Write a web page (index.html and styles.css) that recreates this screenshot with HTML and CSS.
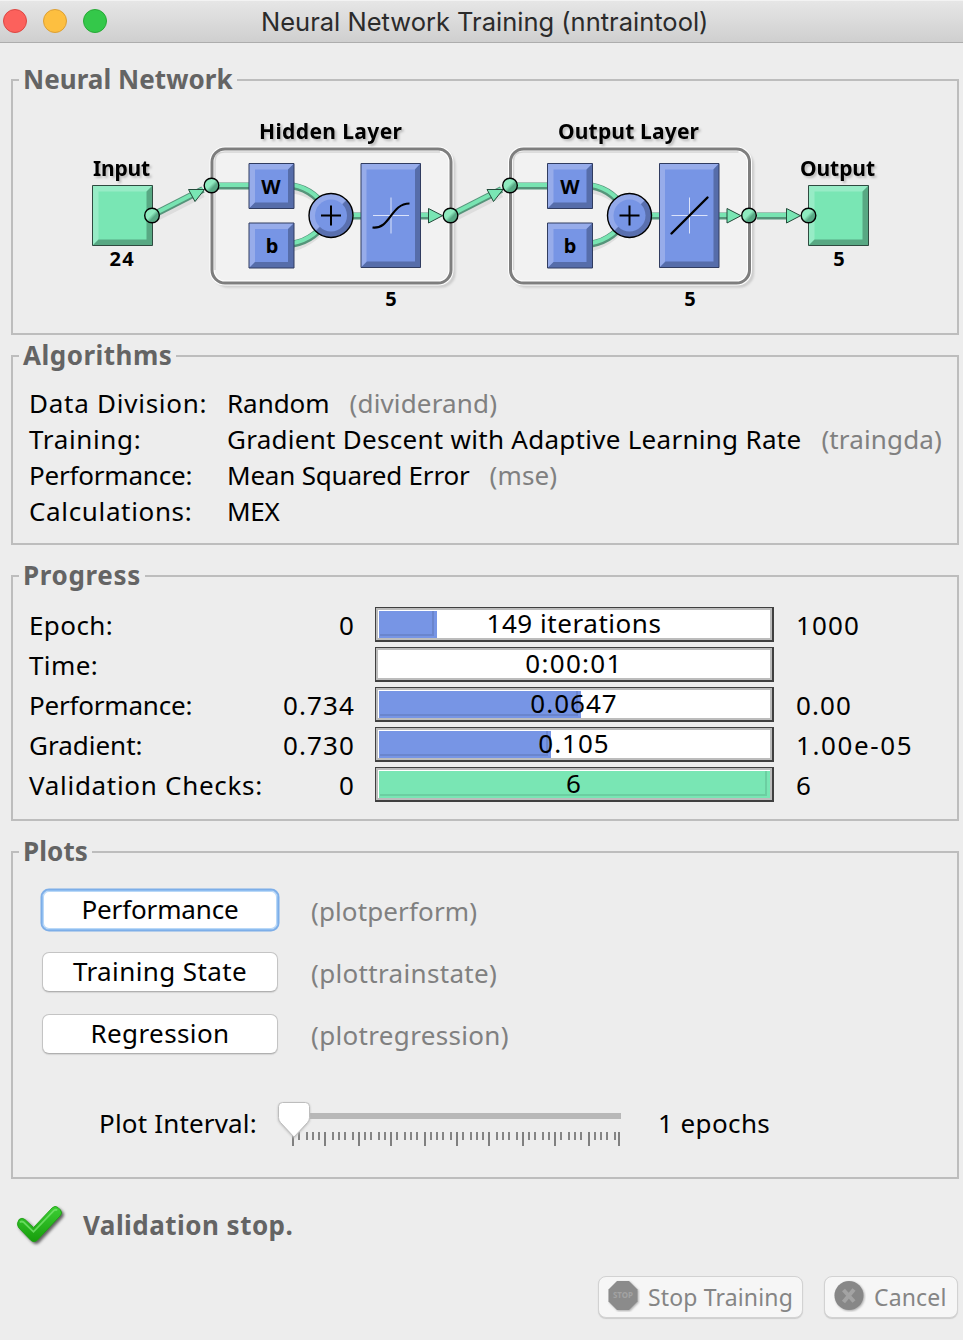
FILE: index.html
```html
<!DOCTYPE html>
<html lang="en">
<head>
<meta charset="utf-8">
<title>Neural Network Training (nntraintool)</title>
<link rel="stylesheet" href="styles.css">
</head>
<body>
<header class="titlebar">
  <div class="lights"><i class="light red"></i><i class="light yellow"></i><i class="light green"></i></div>
  <h1 class="title">Neural Network Training (nntraintool)</h1>
</header>
<main class="content">
  <section class="panel network">
    <h2 class="legend l-network">Neural Network</h2>
    <svg class="diagram" viewBox="13 81 944 252" width="944" height="252">
      <defs>
        <linearGradient id="ball" x1="0" y1="0" x2="1" y2="1"><stop offset=".45" stop-color="#8eeabf"/><stop offset=".62" stop-color="#58a985"/></linearGradient>
        <linearGradient id="rim" x1="0" y1="0" x2="1" y2="1"><stop offset=".49" stop-color="#93a9ea"/><stop offset=".51" stop-color="#5a70af"/></linearGradient>
        <filter id="soft" x="-20%" y="-20%" width="140%" height="140%"><feGaussianBlur stdDeviation="1"/></filter>
        <g id="io"><path fill="#79e6b4" d="M0 0h60v60H0z"/><path fill="#97ecc6" d="M0 0h60l-6 6H6v48l-6 6z"/><path fill="#58a883" d="M60 0v60H0l6-6h48V6z"/><path fill="none" stroke="#2f4a40" d="M0 0h60v60H0z"/></g>
        <g id="param"><path fill="#7795e5" d="M0 0h45v45H0z"/><path fill="#97acea" d="M0 0h45l-6 6H6v33l-6 6z"/><path fill="#566daa" d="M45 0v45H0l6-6h33V6z"/><path fill="none" stroke="#303c60" d="M0 0h45v45H0z"/></g>
        <g id="node"><circle r="7.3" fill="url(#ball)" stroke="#000" stroke-width="1.4"/></g>
        <g id="layer">
          <rect x="215" y="152" width="239" height="134" rx="13" fill="none" stroke="#aaa" stroke-width="3" opacity=".55" filter="url(#soft)"/>
          <rect x="210" y="147" width="242" height="137" rx="15" fill="#fff"/>
          <rect x="212" y="149" width="239" height="134" rx="13" fill="#f2f2f2" stroke="#fff" stroke-width="5"/>
          <path d="M215 270V161q0-9 10-9h215" fill="none" stroke="#d5d5d5" stroke-width="1.5"/>
          <rect x="212" y="149" width="239" height="134" rx="13" fill="none" stroke="#7e7e7e" stroke-width="3"/>
          <g fill="none" stroke="#dedede" stroke-width="7"><path d="M293 190q23 3 37 25M293 248q23-7 37-28"/></g>
          <g fill="none" stroke="#55947a" stroke-width="7"><path d="M212 186h38M293 186q23 4 37 29M293 244q23-4 37-28M350 216h80"/></g>
          <g fill="none" stroke="#78e4b2" stroke-width="4"><path d="M212 185h38M293 185q23 4 37 29M293 243q23-4 37-28M350 215h80"/></g>
          <use href="#param" x="249" y="163.500"/><use href="#param" x="249" y="223"/>
          <circle cx="331" cy="215.500" r="22" fill="url(#rim)" stroke="#000" stroke-width="1.4"/><circle cx="331" cy="215.500" r="16" fill="#7795e5"/>
          <path d="M321 215.500h20M331 205.500v20" stroke="#000" stroke-width="2"/>
          <g transform="translate(-.5 0)"><path fill="#7795e5" d="M361.500 163.500h59.500v104h-59.500z"/><path fill="#97acea" d="M361.500 163.500H421l-6 6h-48v92l-5.500 6z"/><path fill="#566daa" d="M421 163.500v104h-59.500l6-6h48v-92z"/><path fill="none" stroke="#303c60" d="M361.500 163.500H421v104h-59.500z"/></g>
          <path d="M373 215.500h36M391 197.500v36" stroke="#dbe3fa"/>
          <path d="M428.500 208.500v14.500l14-7.300z" fill="#79e6b4" stroke="#234b3a"/>
        </g>
        <g id="link"><path d="M152 220l51-26" stroke="#ddd" stroke-width="7"/><path d="M152 215.500l51-26" stroke="#55947a" stroke-width="7"/><path d="M152 215l51-26" stroke="#78e4b2" stroke-width="4"/><path d="M188.500 189.500l16 0-9.500 12z" fill="#79e6b4" stroke="#234b3a"/></g>
      </defs>
      <use href="#link"/>
      <use href="#layer"/>
      <use href="#link" x="298.500"/>
      <use href="#layer" x="298.500"/>
      <path d="M372.500 227.500c18 2 18-24 37-24" fill="none" stroke="#000" stroke-width="2.200"/>
      <path d="M671.500 233.500l36-36" stroke="#000" stroke-width="2.400" stroke-linecap="round"/>
      <path d="M757 216h34" stroke="#55947a" stroke-width="7"/><path d="M757 215h34" stroke="#78e4b2" stroke-width="4"/>
      <path d="M786.500 208.500v14.500l14-7.300z" fill="#79e6b4" stroke="#234b3a"/>
      <use href="#io" x="92.500" y="185.500"/><use href="#io" x="808.500" y="185.500"/>
      <use href="#node" x="152" y="215.500"/><use href="#node" x="749" y="215.500"/><use href="#node" x="808.500" y="215.500"/><use href="#node" x="211.500" y="185.500"/><use href="#node" x="510" y="185.500"/><use href="#node" x="450.500" y="215.500"/>
      <g class="caption">
        <text x="93" y="176" textLength="57">Input</text><text x="259" y="139" textLength="143">Hidden Layer</text><text x="558" y="139" textLength="141">Output Layer</text><text x="800" y="176" textLength="75">Output</text>
      </g>
      <g class="count">
        <text x="109.500" y="266" class="wide">24</text><text x="391" y="306">5</text><text x="690" y="306">5</text><text x="839" y="266">5</text>
        <text x="271" y="194">W</text><text x="272" y="253">b</text><text x="570" y="194">W</text><text x="570" y="253">b</text>
      </g>
    </svg>
  </section>

  <section class="panel algorithms">
    <h2 class="legend l-algorithms">Algorithms</h2>
    <dl class="facts">
      <dt class="t-division">Data Division:</dt><dd><span class="t-random">Random</span><span class="fn t-divfn">(dividerand)</span></dd>
      <dt class="t-training">Training:</dt><dd><span class="t-gd">Gradient Descent with Adaptive Learning Rate</span><span class="fn t-gdfn">(traingda)</span></dd>
      <dt class="t-perf">Performance:</dt><dd><span class="t-mse">Mean Squared Error</span><span class="fn t-msefn">(mse)</span></dd>
      <dt class="t-calc">Calculations:</dt><dd><span class="t-mex">MEX</span></dd>
    </dl>
  </section>

  <section class="panel progress">
    <h2 class="legend l-progress">Progress</h2>
    <div class="row"><span>Epoch:</span><span class="from">0</span><div class="bar"><i class="fill" style="width:58px"></i><b class="value v-epoch">149 iterations</b></div><span class="to">1000</span></div>
    <div class="row"><span>Time:</span><span class="from"></span><div class="bar"><b class="value v-time">0:00:01</b></div><span class="to"></span></div>
    <div class="row"><span class="t-perf">Performance:</span><span class="from">0.734</span><div class="bar"><i class="fill" style="width:202px"></i><b class="value">0.0647</b></div><span class="to">0.00</span></div>
    <div class="row"><span class="t-gradient">Gradient:</span><span class="from">0.730</span><div class="bar"><i class="fill" style="width:172px"></i><b class="value">0.105</b></div><span class="to to-gradient">1.00e-05</span></div>
    <div class="row"><span class="t-checks">Validation Checks:</span><span class="from">0</span><div class="bar"><i class="fill done" style="width:391px"></i><b class="value">6</b></div><span class="to">6</span></div>
  </section>

  <section class="panel plots">
    <h2 class="legend l-plots">Plots</h2>
    <div class="plot"><button class="button focused b-perf">Performance</button><span class="fn p-perf">(plotperform)</span></div>
    <div class="plot"><button class="button">Training State</button><span class="fn">(plottrainstate)</span></div>
    <div class="plot"><button class="button">Regression</button><span class="fn">(plotregression)</span></div>
    <div class="interval">
      <span class="interval-label">Plot Interval:</span>
      <svg class="slider" viewBox="276 1098 350 54" width="350" height="54">
        <path d="M300 1116h321" stroke="#b8b8b8" stroke-width="6"/>
        <path d="M293 1132v14M325 1132v14M359 1132v14M391 1132v14M425 1132v14M457 1132v14M489 1132v14M523 1132v14M555 1132v14M589 1132v14M619 1132v14" stroke="#808080" stroke-width="2"/>
        <path d="M299 1132v8M307 1132v8M313 1132v8M319 1132v8M333 1132v8M339 1132v8M345 1132v8M353 1132v8M365 1132v8M371 1132v8M379 1132v8M385 1132v8M397 1132v8M405 1132v8M411 1132v8M417 1132v8M431 1132v8M437 1132v8M443 1132v8M451 1132v8M463 1132v8M471 1132v8M477 1132v8M483 1132v8M497 1132v8M503 1132v8M509 1132v8M517 1132v8M529 1132v8M535 1132v8M543 1132v8M549 1132v8M561 1132v8M569 1132v8M575 1132v8M581 1132v8M595 1132v8M601 1132v8M607 1132v8M615 1132v8" stroke="#858585" stroke-width="2"/>
        <path class="thumb" d="M282.500 1102.500h23q4 0 4 4v11q0 3-2 5l-13.500 14.500-13.500-14.500q-2-2-2-5v-11q0-4 4-4z" fill="#fff" stroke="#bdbdbd"/>
      </svg>
      <span class="interval-value">1 epochs</span>
    </div>
  </section>

  <div class="status">
    <svg class="check" viewBox="14 1200 54 48" width="54" height="48">
      <defs><linearGradient id="leaf" x1="0" y1="0" x2="0" y2="1"><stop offset="0" stop-color="#3dcf35"/><stop offset="1" stop-color="#169d0b"/></linearGradient></defs>
      <path class="check-mark" d="M19 1219.500q3-2.500 6 0l8.500 8 18.500-19.500q3-3 6-.5l2.500 2.500q2.500 3-.5 6l-23 24.500q-3 2.500-6 0l-12.500-13q-2.500-3.500.5-8z" fill="url(#leaf)" stroke="#1d9e12" stroke-width=".8"/>
      <path d="M20 1222.500q1.500-2 4 0l9.500 9.300 20.500-21.300q2-1.500 3 0" fill="none" stroke="#7be571" stroke-width="1.800" opacity=".75"/>
    </svg>
    <strong class="status-text">Validation stop.</strong>
  </div>

  <footer class="actions">
    <button class="action stop" disabled>
      <svg class="action-icon" viewBox="0 0 32 32" width="32" height="32"><path class="badge" d="M9 1h12L29.500 9.500v12L21 30H9L.5 21.500v-12z" fill="#8b8b8b"/><text class="stop-word" x="5" y="18" textLength="20" lengthAdjust="spacingAndGlyphs">STOP</text></svg>
      <span class="stop-label">Stop Training</span>
    </button>
    <button class="action cancel" disabled>
      <svg class="action-icon" viewBox="0 0 32 32" width="32" height="32"><circle class="badge" cx="15" cy="15.500" r="14.500" fill="#878787"/><path d="M9.500 10l10.500 11.500M20 9.500l-10.500 12.500" stroke="#a3a3a3" stroke-width="4"/></svg>
      <span class="cancel-label">Cancel</span>
    </button>
  </footer>
</main>
</body>
</html>
```
FILE: styles.css
```css
* { box-sizing: border-box; }
body { margin: 0; width: 963px; height: 1340px; overflow: hidden; background: #ededed; color: #000; font: 26px/36px "Noto Sans", sans-serif; letter-spacing: .4px; }
h1, h2, dl, dt, dd { margin: 0; font: inherit; }
.titlebar { display: grid; grid-template-columns: 261px 1fr; height: 43px; background: linear-gradient(#e6e6e6, #cfcfcf); border-top: 1px solid #f3f3f3; border-bottom: 1px solid #adadad; }
.lights { display: flex; gap: 16px; padding: 8px 0 0 3px; }
.light { width: 24px; height: 24px; border-radius: 50%; border: 1px solid; }
.red { background: #fc615c; border-color: #dc4743; }
.yellow { background: #fdbf40; border-color: #dc9f34; }
.green { background: #34c84a; border-color: #27a936; }
.title { font: 25.5px/42px Inter, sans-serif; letter-spacing: 0; color: #2b2b2b; white-space: nowrap; }
.content { display: flex; flex-direction: column; padding: 36px 4px 0 11px; }
.panel { position: relative; border: 2px solid #bdbdbd; width: 948px; }
.legend { position: absolute; left: 6px; top: -20px; padding: 0 4px 0 4px; background: #ededed; color: #646464; font-weight: bold; white-space: nowrap; }
.l-network { letter-spacing: .05px; }
.l-algorithms { letter-spacing: .5px; }
.l-progress { letter-spacing: .65px; }
.l-plots { letter-spacing: .1px; }
.network { height: 256px; }
.diagram { display: block; }
.diagram text { font-family: "Noto Sans", sans-serif; font-weight: bold; letter-spacing: 0; }
.caption { font-size: 21px; filter: drop-shadow(2px 2px 1px #bbb); }
.count { font-size: 20px; text-anchor: middle; }
.diagram .wide { text-anchor: start; letter-spacing: 1.2px; }
.algorithms { height: 190px; margin-top: 20px; padding: 28px 0 0 16px; }
.facts { display: grid; grid-template-columns: 198px auto; grid-auto-rows: 36px; white-space: nowrap; }
.facts dd { display: flex; gap: 20px; }
.fn { color: #808080; }
.t-division { letter-spacing: .75px; }
.t-training { letter-spacing: .65px; }
.t-perf { letter-spacing: -.2px; }
.t-calc { letter-spacing: .65px; }
.t-random { letter-spacing: -.05px; }
.t-divfn, .t-gdfn, .t-msefn { letter-spacing: .15px; }
.t-gd { letter-spacing: .28px; }
.t-mse { letter-spacing: -.2px; }
.t-mex { letter-spacing: -.3px; }
.progress { height: 246px; margin-top: 30px; padding: 30px 0 0 16px; }
.row { display: grid; grid-template-columns: 246px 80px 20px 399px auto; height: 40px; white-space: nowrap; }
.row > span { line-height: 36px; }
.row .bar { grid-column: 4; }
.from { text-align: right; letter-spacing: 1.1px; }
.to { padding-left: 22px; letter-spacing: 1.1px; }
.to-gradient { letter-spacing: 1.6px; }
.t-gradient { letter-spacing: 0; }
.t-checks { letter-spacing: .7px; }
.bar { position: relative; height: 35px; background: #fff; border: solid #404040; border-width: 1px 2px 2px 1px; box-shadow: inset 0 0 0 2px #bcbcbc; display: grid; }
.fill { position: absolute; left: 3px; top: 3px; height: 27px; background: #7795e5; }
.fill::after { content: ""; position: absolute; left: 1px; top: 0; right: 3px; bottom: 2px; border: solid rgba(0,0,0,.1); border-width: 0 2px 2px 0; }
.done { background: #79e6b4; }
.value { position: relative; font-weight: normal; line-height: 30px; text-align: center; letter-spacing: 1px; }
.v-epoch { letter-spacing: .55px; }
.v-time { letter-spacing: 1.3px; }
.plots { height: 328px; margin-top: 30px; padding: 37px 0 0 29px; }
.plot { display: flex; align-items: flex-start; gap: 33px; height: 62px; }
.plot .fn { line-height: 43px; letter-spacing: .33px; }
.plot .p-perf { letter-spacing: .12px; }
.button { width: 236px; height: 40px; padding: 0 0 2px; border: 1px solid #c4c4c4; border-bottom-color: #b0b0b0; border-radius: 7px; background: #fff; color: #000; font: inherit; letter-spacing: inherit; line-height: 36px; box-shadow: 0 1px 1px #d4d4d4; }
.focused { border: 1px solid #8fbdf0; box-shadow: 0 0 0 1.500px #7daee8, inset 0 0 0 1px #b9d8f7; }
.b-perf { letter-spacing: -.15px; }
.interval { display: grid; grid-template-columns: 177px 350px auto; padding: 22px 0 0 57px; }
.interval-label { line-height: 50px; letter-spacing: .17px; }
.interval-value { line-height: 50px; padding-left: 32px; }
.interval, .status { white-space: nowrap; }
.slider { display: block; }
.thumb { filter: drop-shadow(0 1px 1px #bbb); }
.status { display: flex; height: 54px; margin-top: 21px; padding-left: 3px; }
.check-mark { filter: drop-shadow(2px 2px 1.500px rgba(0,0,0,.6)); }
.status-text { color: #646464; margin-left: 15px; line-height: 50px; letter-spacing: .47px; }
.actions { display: flex; gap: 21px; margin: 22px 0 0 587px; }
.action { display: flex; flex: none; gap: 8px; height: 42px; padding: 3px 0 0 9px; border: 1px solid #d2d2d2; border-radius: 8px; background: #f6f6f6; color: #858585; font: inherit; font-size: 23px; letter-spacing: .15px; line-height: 34px; box-shadow: 0 1px 1px #ccc; white-space: nowrap; }
.action-icon { flex: none; }
.stop { width: 205px; }
.cancel { width: 134px; }
.badge { filter: drop-shadow(1px 1px 1px #aaa); }
.stop-word { font: bold 9px "Noto Sans", sans-serif; letter-spacing: 0; fill: #a3a3a3; }
```
